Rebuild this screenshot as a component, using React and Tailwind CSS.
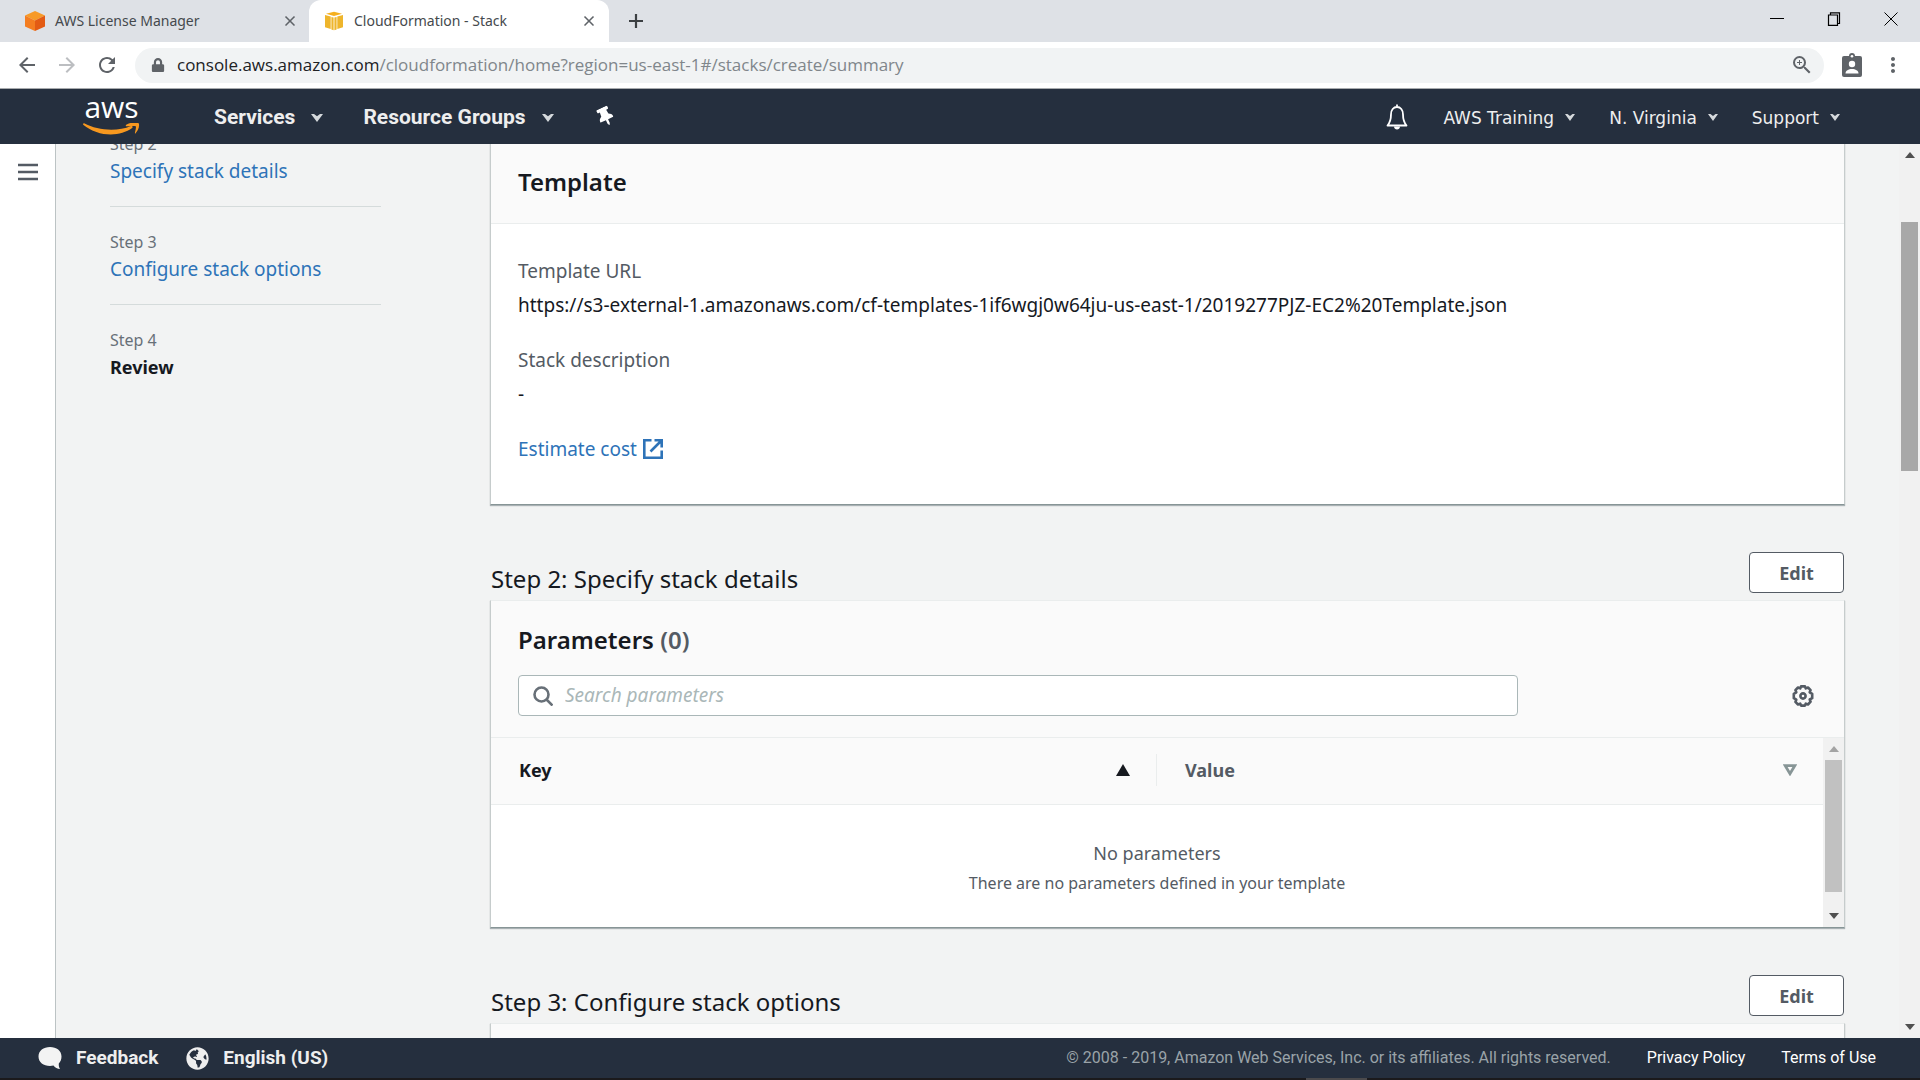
import { LuX } from "react-icons/lu";
import { FaLock, FaThumbtack, FaGlobeAmericas } from "react-icons/fa";
import {
  MdArrowBack,
  MdArrowForward,
  MdRefresh,
  MdZoomIn,
  MdMoreVert,
} from "react-icons/md";

const Caret = ({ className = "" }) => (
  <svg viewBox="0 0 10 8" preserveAspectRatio="none" className={className} fill="currentColor" aria-hidden="true">
    <path d="M0 0h10L5 8z" />
  </svg>
);

const Notched = ({ className }) => (
  <svg viewBox="0 0 12 9" preserveAspectRatio="none" className={className} fill="currentColor" aria-hidden="true">
    <path d="M0 0h3L6 2.600 9 0h3L6 9z" />
  </svg>
);

function Cube({ tone }) {
  if (tone === "orange") {
    return (
      <svg viewBox="0 0 20 20" className="h-5 w-5 shrink-0" aria-hidden="true">
        <path d="M10 0l10 4.500-10 5L0 4.500z" fill="#f79a28" />
        <path d="M0 4.500l10 5V20L0 15.500z" fill="#f47d20" />
        <path d="M20 4.500l-10 5V20l10-4.500z" fill="#e35b14" />
      </svg>
    );
  }
  return (
    <svg viewBox="0 0 20 20" className="h-5 w-5 shrink-0" aria-hidden="true">
      <path d="M1 4l5.700 1.500V18L1 16.300z" fill="#eeb52c" />
      <path d="M19 4l-5.700 1.500V18l5.700-1.700z" fill="#eeb52c" />
      <path d="M7.400 6l2.200.6v12.600l-2.200-.7zM12.600 6l-2.200.6v12.600l2.200-.7z" fill="#eeb52c" />
      <path d="M2 2.700L10 .8l8 1.900-8 2.400z" fill="#f6b01e" />
    </svg>
  );
}

function AwsLogo() {
  return (
    <a href="#home" aria-label="aws" className="mb-1 block w-[57px] text-center font-['Open_Sans',sans-serif]">
      <span className="block text-[30px] leading-6 font-medium text-white">aws</span>
      <svg viewBox="0 0 170 36" className="mt-1 block h-3 w-[57px]" fill="#f7981f" aria-hidden="true">
        <path d="M3 1C45 24 105 26 143 9c5-1 7 3 4 6C110 42 45 42 0 5c-1-3 1-5 3-4z" />
        <path d="M128 6c14-9 30-9 39-5 3 11-3 23-11 31-3-1 4-15 2-22-8-2-20 0-30 0z" />
      </svg>
    </a>
  );
}

function Tab({ tone, title, active }) {
  return (
    <div
      className={
        active
          ? "flex h-full w-[300px] items-center rounded-t-xl bg-white pr-3 pl-[15px]"
          : "flex h-full w-[309px] items-center pr-[11px] pl-[25px]"
      }
    >
      <Cube tone={tone} />
      <span className="ml-2.5 flex-1 text-sm whitespace-nowrap text-[#45494d]">{title}</span>
      <button aria-label={"Close " + title} className="text-[#5f6368]">
        <LuX className="h-4 w-4" strokeWidth={2.500} />
      </button>
    </div>
  );
}

function BrowserBar() {
  return (
    <header className="shrink-0 font-['Noto_Sans',sans-serif]">
      <div className="flex h-[42px] bg-[#dee1e6]">
        <Tab tone="orange" title="AWS License Manager" />
        <Tab tone="yellow" title="CloudFormation - Stack" active />
        <button aria-label="New tab" className="ml-[19px] text-[#3c4043]">
          <svg viewBox="0 0 16 16" className="h-4 w-4" stroke="currentColor" strokeWidth="2.200" aria-hidden="true">
            <path d="M8 1v14M1 8h14" />
          </svg>
        </button>
        <div className="ml-auto flex items-center gap-[43px] pr-[22px] pb-1 text-black">
          <button aria-label="Minimize">
            <svg viewBox="0 0 14 14" className="h-3.5 w-3.5" stroke="currentColor" aria-hidden="true">
              <path d="M0 6.500h14" />
            </svg>
          </button>
          <button aria-label="Restore">
            <svg viewBox="0 0 14 14" className="h-3.5 w-3.5" stroke="currentColor" strokeWidth="1.200" fill="none" aria-hidden="true">
              <path d="M1.500 3h9v10.400h-9zM3.500 3V.8h9V11.500h-2" />
            </svg>
          </button>
          <button aria-label="Close window">
            <svg viewBox="0 0 14 14" className="h-3.5 w-3.5" stroke="currentColor" aria-hidden="true">
              <path d="M.5.5l13 13M13.500.5l-13 13" />
            </svg>
          </button>
        </div>
      </div>
      <div className="flex h-[47px] items-center border-b border-[#a8abae] bg-white pr-[15px] pl-[15px]">
        <button aria-label="Back" className="text-[#5f6368]"><MdArrowBack className="h-6 w-6" /></button>
        <button aria-label="Forward" className="ml-4 text-[#bcbec1]"><MdArrowForward className="h-6 w-6" /></button>
        <button aria-label="Reload" className="ml-4 text-[#5f6368]"><MdRefresh className="h-6 w-6" /></button>
        <div className="ml-4 flex h-[35px] flex-1 items-center rounded-full bg-[#f1f3f4] pr-2.5 pl-4">
          <FaLock className="h-3.5 w-3.5 text-[#5f6368]" />
          <span className="ml-3 flex-1 font-['Open_Sans',sans-serif] text-[17px] whitespace-nowrap text-[#80868b]">
            <span className="text-[#202124]">console.aws.amazon.com</span>
            /cloudformation/home?region=us-east-1#/stacks/create/summary
          </span>
          <button aria-label="Zoom" className="text-[#5f6368]"><MdZoomIn className="h-6 w-6" /></button>
        </div>
        <button aria-label="Profile" className="ml-[18px] text-[#5f6368]">
          <svg viewBox="0 0 20 24" className="h-6 w-5" aria-hidden="true">
            <rect x="0" y="3" width="20" height="21" rx="2" fill="currentColor" />
            <circle cx="10" cy="3" r="3" fill="currentColor" />
            <circle cx="10" cy="3.200" r="1.300" fill="#fff" />
            <circle cx="10" cy="11" r="3.200" fill="#fff" />
            <path d="M3.500 20.500c0-3 3-4.500 6.500-4.500s6.500 1.500 6.500 4.500z" fill="#fff" />
          </svg>
        </button>
        <button aria-label="Browser menu" className="ml-[19px] text-[#5f6368]"><MdMoreVert className="h-6 w-6" /></button>
      </div>
    </header>
  );
}

function ConsoleNav() {
  return (
    <nav className="flex h-[55px] shrink-0 items-center bg-[#252f3e] pr-20 pl-[83px] text-[#eeeeee]">
      <AwsLogo />
      <button className="ml-[74px] flex items-center gap-4 font-[Roboto,sans-serif] text-[21px] leading-8 font-bold">
        Services <Notched className="mt-0.5 h-2 w-3 text-[#d5d9dc]" />
      </button>
      <button className="ml-10 flex items-center gap-4 font-[Roboto,sans-serif] text-[21px] leading-8 font-bold">
        Resource Groups <Notched className="mt-0.5 h-2 w-3 text-[#d5d9dc]" />
      </button>
      <button aria-label="Pin" className="ml-[42px] text-white">
        <FaThumbtack className="h-[19px] w-[19px] -rotate-[25deg]" />
      </button>
      <div className="mt-1 ml-auto flex items-center font-['DejaVu_Sans',sans-serif] text-[17px]">
        <button aria-label="Notifications" className="mr-[35px] mb-1 text-white">
          <svg viewBox="0 0 22 26" className="h-[26px] w-[22px]" fill="none" stroke="currentColor" strokeWidth="1.800" strokeLinejoin="round" aria-hidden="true">
            <path d="M1.500 21.500C4 18.500 5 15 5 10.500 5 6 7.500 3 11 3s6 3 6 7.500c0 4.500 1 8 3.500 11z" />
            <path d="M11 .5v2" />
            <path d="M8 22.500h6c0 4-6 4-6 0z" fill="currentColor" stroke="none" />
          </svg>
        </button>
        <div className="flex gap-[34px]">
          {["AWS Training", "N. Virginia", "Support"].map((label) => (
            <button key={label} className="flex items-center gap-[11px]">
              {label} <Notched className="mb-0.5 h-[7px] w-2.5 text-[#d5d9dc]" />
            </button>
          ))}
        </div>
      </div>
    </nav>
  );
}

const steps = [
  { step: "Step 2", name: "Specify stack details" },
  { step: "Step 3", name: "Configure stack options" },
  { step: "Step 4", name: "Review", current: true },
];

function Steps() {
  return (
    <ol className="-mt-3 w-[271px] shrink-0">
      {steps.map(({ step, name, current }) => (
        <li key={step} className="mb-[23px] border-b border-[#d5dbdb] pb-[23px] last:border-0">
          <div className="text-base leading-6 text-[#687078]">{step}</div>
          {current ? (
            <div className="mt-[3px] text-lg leading-6 font-bold text-[#16191f]">{name}</div>
          ) : (
            <a href={"#" + step} className="mt-[3px] block text-[19px] leading-6 text-[#2e73b8]">{name}</a>
          )}
        </li>
      ))}
    </ol>
  );
}

const Card = ({ children, className = "" }) => (
  <section
    className={
      "-mx-px border border-t-[#eaeded] border-r-[#c6cccc] border-b-[#879596] border-l-[#c6cccc] shadow-[0_1px_1px_0_rgba(0,28,36,0.3)] " +
      className
    }
  >
    {children}
  </section>
);

const StepHeading = ({ children }) => (
  <div className="flex items-start justify-between">
    <h2 className="mt-[11px] text-2xl leading-8 text-[#16191f]">{children}</h2>
    <button className="h-[41px] w-[95px] rounded-sm border border-[#545b64] bg-white text-lg font-bold text-[#545b64]">
      Edit
    </button>
  </div>
);

function Scrollbar({ thumb, dim }) {
  return (
    <div className="flex w-[21px] shrink-0 flex-col items-center bg-[#f1f1f1]" aria-hidden="true">
      <Caret className={dim ? "my-2 h-1.5 w-2.5 rotate-180 text-[#a3a3a3]" : "my-2 h-1.5 w-2.5 rotate-180 text-[#505050]"} />
      <div className={thumb} />
      <Caret className="mt-auto mb-2 h-1.5 w-2.5 text-[#505050]" />
    </div>
  );
}

function TemplateCard() {
  return (
    <Card className="-mt-2 bg-white">
      <h3 className="border-b border-[#eaeded] bg-[#fafafa] px-[27px] pt-[29px] pb-[25px] text-2xl leading-8 font-semibold text-[#16191f]">
        Template
      </h3>
      <div className="px-[27px] pt-[31px] pb-[39px]">
        <dl className="text-[19px] leading-8">
          <dt className="text-[#545b64]">Template URL</dt>
          <dd className="mt-0.5 text-[#16191f]">
            https://s3-external-1.amazonaws.com/cf-templates-1if6wgj0w64ju-us-east-1/2019277PJZ-EC2%20Template.json
          </dd>
          <dt className="mt-[23px] text-[#545b64]">Stack description</dt>
          <dd className="mt-0.5 text-[#16191f]">-</dd>
        </dl>
        <a href="#estimate" className="mt-[23px] flex items-center gap-1.5 text-[19px] leading-8 text-[#2e73b8]">
          Estimate cost
          <svg viewBox="0 0 20 20" className="h-5 w-5" fill="none" stroke="currentColor" strokeWidth="2.600" aria-hidden="true">
            <path d="M8.500 1.300H1.300v17.400h17.400V11.500M11.500 1.300h7.200v7.200M18.500 1.500L7.500 12.500" />
          </svg>
        </a>
      </div>
    </Card>
  );
}

function ParametersCard() {
  return (
    <Card className="mt-[5px] bg-white">
      <div className="border-b border-[#eaeded] bg-[#fafafa] px-[27px] pt-[23px] pb-[21px]">
        <h3 className="text-2xl leading-8 font-semibold text-[#16191f]">
          Parameters <span className="text-[#545b64]">(0)</span>
        </h3>
        <div className="mt-[19px] flex items-center justify-between">
          <label className="flex h-[41px] w-[77%] items-center gap-3 rounded-sm border border-[#aab7b8] bg-white px-3.5">
            <svg viewBox="0 0 20 20" className="h-5 w-5 shrink-0" fill="none" stroke="#687078" strokeWidth="2.600" aria-hidden="true">
              <circle cx="8.500" cy="8.500" r="7" />
              <path d="M13.500 13.500l6 6" />
            </svg>
            <input
              aria-label="Search parameters"
              placeholder="Search parameters"
              className="min-w-0 flex-1 bg-transparent text-[19px] outline-none placeholder:text-[#aab7b8] placeholder:italic"
            />
          </label>
          <button aria-label="Preferences" className="mr-[3px] text-[#545b64]">
            <svg viewBox="-11 -11 22 22" className="h-[22px] w-[22px]" fill="none" stroke="currentColor" strokeWidth="2.600" strokeLinejoin="round" aria-hidden="true">
              <path d="M-2-9.600h4l.8 2 2.200-.9 2.600 2.600-.9 2.200 2.500 1.500v4.400l-2.500 1.300.9 2.200L5 8.500l-2.200-.9L2 9.600h-4l-.8-2-2.200.9-2.600-2.600.9-2.200L-9.200 2.200v-4.400L-6.700-3.700l-.9-2.200L-5-8.500l2.200.9z" />
              <circle r="2.600" />
            </svg>
          </button>
        </div>
      </div>
      <div className="flex">
        <table className="flex-1 table-fixed">
          <thead className="bg-[#fafafa] text-lg">
            <tr className="border-b border-[#eaeded]">
              <th className="w-1/2 pt-4 pb-[18px] text-left text-[#16191f]">
                <div className="flex h-8 items-center justify-between border-r border-[#eaeded] pr-[26px] pl-7">
                  Key <Caret className="h-3 w-3.5 rotate-180" />
                </div>
              </th>
              <th className="w-1/2 pt-4 pb-[18px] text-left text-[#545b64]">
                <div className="flex h-8 items-center justify-between pr-[26px] pl-7">
                  Value
                  <svg viewBox="0 0 14 12" className="h-3 w-3.5" fill="none" stroke="#879596" strokeWidth="2.800" aria-hidden="true">
                    <path d="M2.200 1.700h9.600L7 9.700z" />
                  </svg>
                </div>
              </th>
            </tr>
          </thead>
          <tbody>
            <tr>
              <td colSpan={2} className="pt-8 pb-[30px] text-center text-[#545b64]">
                <div className="text-lg leading-8">No parameters</div>
                <div className="text-base leading-7">There are no parameters defined in your template</div>
              </td>
            </tr>
          </tbody>
        </table>
        <Scrollbar dim thumb="h-[132px] w-[17px] bg-[#c1c1c1]" />
      </div>
    </Card>
  );
}

function Footer() {
  return (
    <footer className="shrink-0 bg-[#252f3e] font-[Roboto,sans-serif] text-[#eeeeee]">
      <div className="flex h-10 items-center pr-11 pl-[38px]">
        <button className="flex items-center gap-3.5 text-[19px] font-bold">
          <svg viewBox="0 0 24 24" className="h-6 w-6" fill="#f3f3f3" aria-hidden="true">
            <path d="M12 1C5.500 1 .5 4.800.5 10.500S5.500 20 12 20c1.200 0 2.500-.1 3.500-.4 1.500 2 4 3.400 6.500 3.400-1-1.500-1.400-3.500-1.200-5.500 1.700-1.700 2.700-4.200 2.700-7C23.500 4.800 18.500 1 12 1z" />
          </svg>
          Feedback
        </button>
        <button className="ml-7 flex items-center gap-3.5 text-[19px] font-bold">
          <FaGlobeAmericas className="h-[23px] w-[23px]" />
          English (US)
        </button>
        <span className="ml-auto text-base text-[#9aa3a8]">
          © 2008 - 2019, Amazon Web Services, Inc. or its affiliates. All rights reserved.
        </span>
        <a href="#privacy" className="ml-9 text-base text-white">Privacy Policy</a>
        <a href="#terms" className="ml-9 text-base text-white">Terms of Use</a>
      </div>
      <div className="flex h-0.5 bg-[#1b1a1c] pl-[68%]">
        <div className="w-[61px] bg-[#4b4a4c]" />
      </div>
    </footer>
  );
}

export default function App() {
  return (
    <div className="flex h-screen flex-col overflow-hidden font-['Noto_Sans',sans-serif]">
      <BrowserBar />
      <ConsoleNav />
      <div className="flex min-h-0 flex-1 bg-[#f2f3f3]">
        <aside className="w-14 shrink-0 border-r border-[#bcc3c4] bg-white">
          <button aria-label="Open menu" className="mt-[19px] ml-[18px] block text-[#545b64]">
            <svg viewBox="0 0 20 18" className="h-[18px] w-5" stroke="currentColor" strokeWidth="2.500" aria-hidden="true">
              <path d="M0 2h20M0 9h20M0 16h20" />
            </svg>
          </button>
        </aside>
        <main className="flex min-w-0 flex-1 overflow-hidden pr-[55px] pl-[54px]">
          <Steps />
          <div className="ml-[110px] min-w-0 flex-1">
            <TemplateCard />
            <div className="mt-[47px]">
              <StepHeading>Step 2: Specify stack details</StepHeading>
              <ParametersCard />
            </div>
            <div className="mt-[47px]">
              <StepHeading>Step 3: Configure stack options</StepHeading>
              <Card className="mt-[5px] h-20 bg-[#fafafa]" />
            </div>
          </div>
        </main>
        <Scrollbar thumb="mt-14 h-[249px] w-[17px] bg-[#a8a8a8]" />
      </div>
      <Footer />
    </div>
  );
}
